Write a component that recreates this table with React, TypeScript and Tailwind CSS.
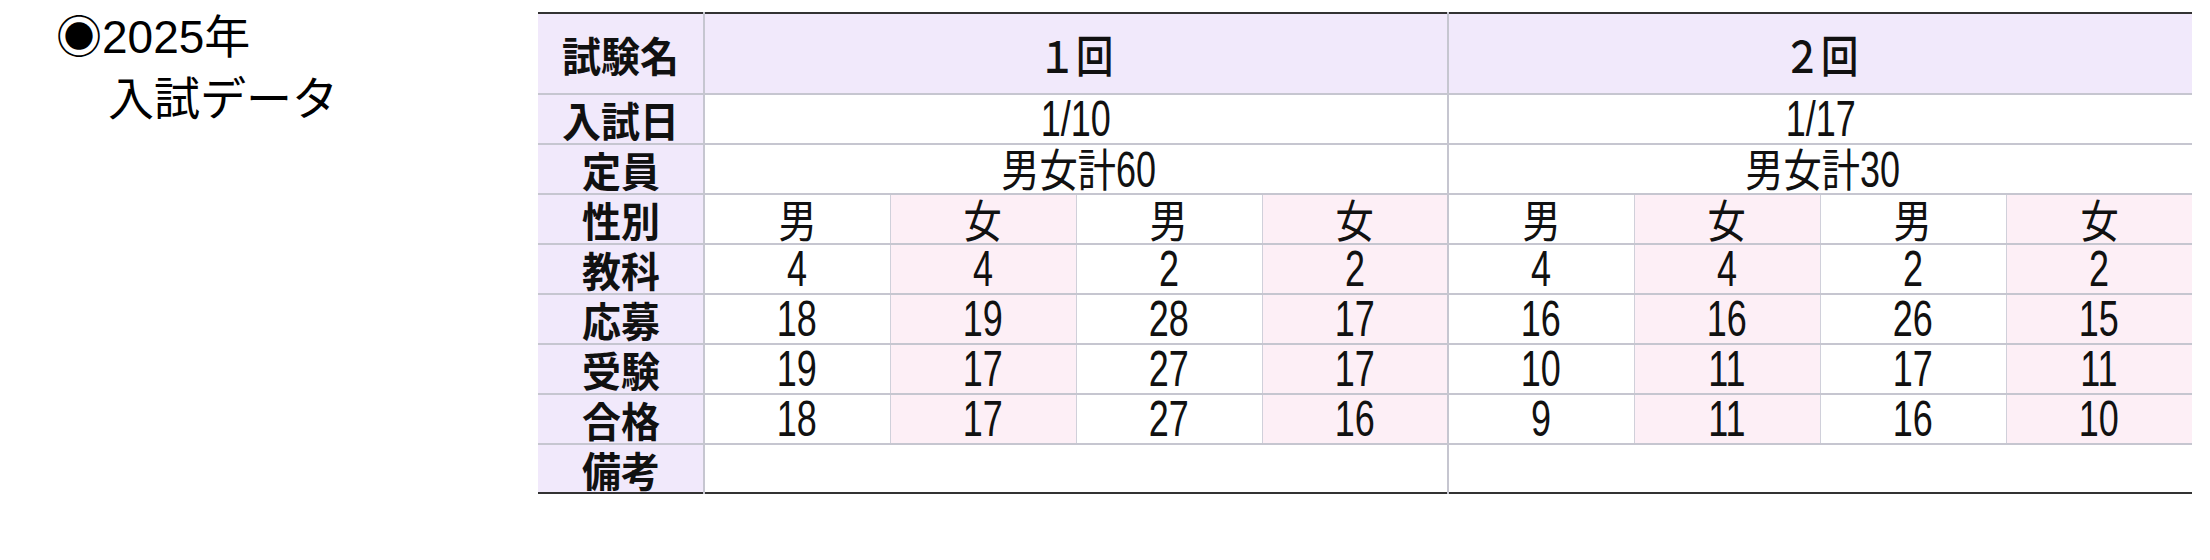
import React from "react";

const LAV = "bg-[#f1e9fb]";
const PINK = "bg-[#fdeff6]";

function Num({ children, origin = "" }: { children: React.ReactNode; origin?: string }) {
  return (
    <span
      className={`inline-block scale-x-[0.72] ${origin} font-['Liberation_Sans','Noto_Sans_CJK_JP',sans-serif] text-[50px] leading-[42px]`}
    >
      {children}
    </span>
  );
}

function Kanji({ children, origin = "" }: { children: React.ReactNode; origin?: string }) {
  return (
    <span
      className={`inline-block scale-x-[0.85] ${origin} font-['Noto_Sans_CJK_JP',sans-serif] text-[45px] leading-[42px]`}
    >
      {children}
    </span>
  );
}

function Box({ h, children }: { h: string; children?: React.ReactNode }) {
  return <div className={`${h} flex items-center justify-center`}>{children}</div>;
}

function Label({ children, last, h = "h-[48px]" }: { children: React.ReactNode; last?: boolean; h?: string }) {
  return (
    <td
      className={`${LAV} border-r-2 border-r-[#c6c6d0] ${last ? "" : "border-b-2 border-b-[#c6c6d0]"} text-center align-middle p-0 leading-none`}
    >
      <Box h={h}>
        <span className="inline-block scale-x-[0.95] font-['Noto_Sans_CJK_JP',sans-serif] font-bold text-[41px] leading-[42px] text-[#111]">
          {children}
        </span>
      </Box>
    </td>
  );
}

const rows: { label: string; v1: number[]; v2: number[] }[] = [
  { label: "教科", v1: [4, 4, 2, 2], v2: [4, 4, 2, 2] },
  { label: "応募", v1: [18, 19, 28, 17], v2: [16, 16, 26, 15] },
  { label: "受験", v1: [19, 17, 27, 17], v2: [10, 11, 17, 11] },
  { label: "合格", v1: [18, 17, 27, 16], v2: [9, 11, 16, 10] },
];

const cellBase = "text-center align-middle p-0 leading-none border-b-2 border-b-[#c6c6d0] text-[#111]";

function Capacity({ n }: { n: string }) {
  return (
    <span className="inline-flex items-baseline">
      <Kanji origin="origin-right">男女計</Kanji>
      <Num origin="origin-left">{n}</Num>
    </span>
  );
}

export default function App() {
  const subCells = (vals: (number | string)[], isNum: boolean, groupEnd: boolean) =>
    vals.map((v, i) => (
      <td
        key={i}
        className={`${cellBase} ${i % 2 === 1 ? PINK : "bg-white"} ${
          i === 3 ? (groupEnd ? "" : "border-r-2 border-r-[#c6c6d0]") : "border-r border-r-[#d0d0da]"
        }`}
      >
        <Box h="h-[48px]">{isNum ? <Num>{v}</Num> : <Kanji>{v}</Kanji>}</Box>
      </td>
    ));

  return (
    <div className="w-[2210px] h-[560px] bg-white flex text-black">
      <div className="w-[538px] shrink-0 pt-[6px] pl-[56px] font-['Liberation_Sans','Noto_Sans_CJK_JP',sans-serif] text-[46px] leading-[62px]">
        <div>◉2025年</div>
        <div className="pl-[52px]">入試データ</div>
      </div>
      <div className="pt-[12px]">
        <table className="table-fixed border-collapse w-[1654px] border-t-2 border-t-[#333] border-b-2 border-b-[#333]">
          <colgroup>
            <col className="w-[166px]" />
            {Array.from({ length: 8 }).map((_, i) => (
              <col key={i} className="w-[186px]" />
            ))}
          </colgroup>
          <tbody>
            <tr>
              <Label h="h-[79px]">試験名</Label>
              <td colSpan={4} className={`${LAV} ${cellBase} border-r-2 border-r-[#c6c6d0]`}>
                <Box h="h-[79px]">
                  <span className="inline-block scale-x-[0.85] font-['Noto_Sans_CJK_JP',sans-serif] font-medium text-[44px] leading-[46px]">
                    １回
                  </span>
                </Box>
              </td>
              <td colSpan={4} className={`${LAV} ${cellBase}`}>
                <Box h="h-[79px]">
                  <span className="inline-block scale-x-[0.85] font-['Noto_Sans_CJK_JP',sans-serif] font-medium text-[44px] leading-[46px]">
                    ２回
                  </span>
                </Box>
              </td>
            </tr>
            <tr>
              <Label>入試日</Label>
              <td colSpan={4} className={`${cellBase} bg-white border-r-2 border-r-[#c6c6d0]`}>
                <Box h="h-[48px]">
                  <Num>1/10</Num>
                </Box>
              </td>
              <td colSpan={4} className={`${cellBase} bg-white`}>
                <Box h="h-[48px]">
                  <Num>1/17</Num>
                </Box>
              </td>
            </tr>
            <tr>
              <Label>定員</Label>
              <td colSpan={4} className={`${cellBase} bg-white border-r-2 border-r-[#c6c6d0]`}>
                <Box h="h-[48px]">
                  <Capacity n="60" />
                </Box>
              </td>
              <td colSpan={4} className={`${cellBase} bg-white`}>
                <Box h="h-[48px]">
                  <Capacity n="30" />
                </Box>
              </td>
            </tr>
            <tr>
              <Label>性別</Label>
              {subCells(["男", "女", "男", "女"], false, false)}
              {subCells(["男", "女", "男", "女"], false, true)}
            </tr>
            {rows.map((r) => (
              <tr key={r.label}>
                <Label>{r.label}</Label>
                {subCells(r.v1, true, false)}
                {subCells(r.v2, true, true)}
              </tr>
            ))}
            <tr>
              <Label last h="h-[47px]">
                備考
              </Label>
              <td colSpan={4} className="bg-white p-0 border-r-2 border-r-[#c6c6d0]">
                <Box h="h-[47px]" />
              </td>
              <td colSpan={4} className="bg-white p-0">
                <Box h="h-[47px]" />
              </td>
            </tr>
          </tbody>
        </table>
      </div>
    </div>
  );
}
